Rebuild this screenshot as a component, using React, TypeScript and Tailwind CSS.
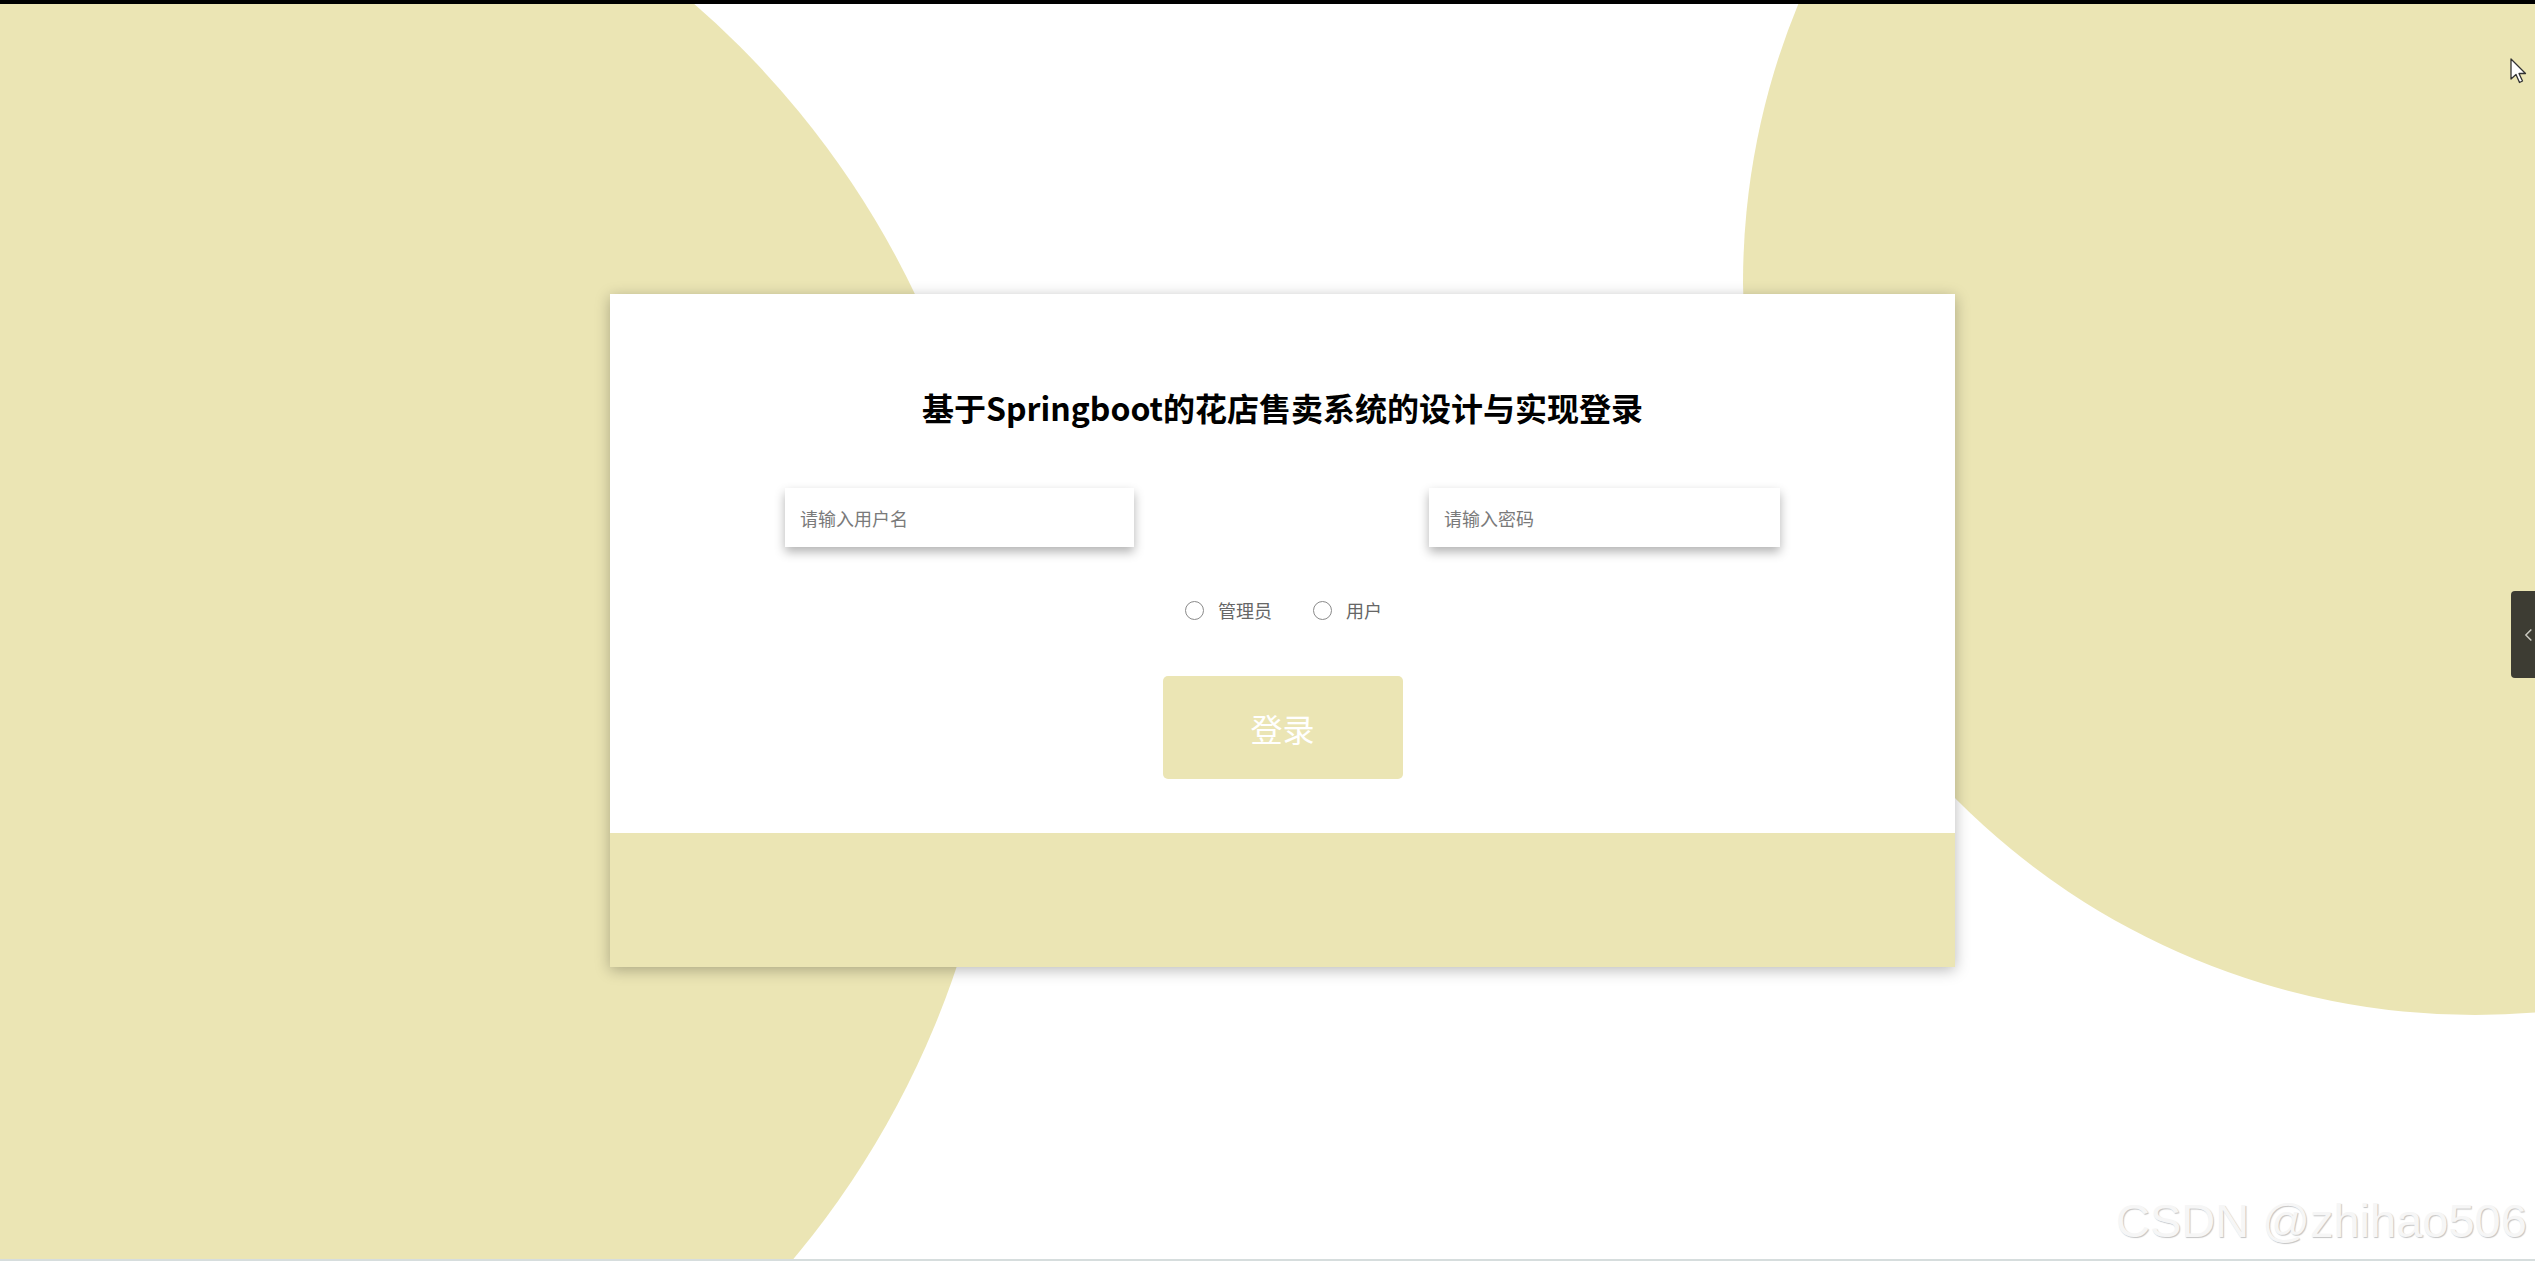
import { useState } from "react";

const KHAKI = "bg-[#ebe5b4]";

function RoleRadio({
  label,
  checked,
  onSelect,
}: {
  label: string;
  checked: boolean;
  onSelect: () => void;
}) {
  return (
    <label className="flex items-center gap-[14px] cursor-pointer" onClick={onSelect}>
      <span className="w-[19px] h-[19px] rounded-full border-[1.5px] border-[#8a8a8a] bg-white flex items-center justify-center">
        {checked && <span className="w-[9px] h-[9px] rounded-full bg-[#8a8a8a]" />}
      </span>
      <span className="text-[18px] leading-[24px] text-[#666]">{label}</span>
    </label>
  );
}

export default function App() {
  const [role, setRole] = useState<string>("");

  return (
    <div className="relative h-[1261px] w-[2535px] overflow-hidden bg-white font-['Noto_Sans_CJK_SC','Noto_Sans',sans-serif]">
      {/* 상단 검은 테두리 */}
      <div className="relative z-20 h-[4px] bg-black" />

      {/* 배경 원 */}
      <div className={`absolute left-[-795px] top-[-217px] w-[1798px] h-[1798px] rounded-full ${KHAKI}`} />
      <div className={`absolute left-[1743px] top-[-449px] w-[1464px] h-[1464px] rounded-full ${KHAKI}`} />

      {/* 로그인 카드 */}
      <div className="relative z-10 ml-[610px] mt-[290px] w-[1345px] shadow-[0_3px_14px_rgba(0,0,0,0.28)]">
        <div className="h-[539px] bg-white flex flex-col items-center pt-[89px]">
          <h1 className="text-[32px] leading-[48px] font-bold text-black">
            基于Springboot的花店售卖系统的设计与实现登录
          </h1>

          <div className="mt-[57px] w-full px-[175px] flex justify-between">
            <input
              type="text"
              placeholder="请输入用户名"
              className="w-[349px] h-[59px] bg-white pl-[15px] text-[18px] text-[#333] placeholder:text-[#7a7a7a] outline-none shadow-[0_5px_10px_rgba(0,0,0,0.3)]"
            />
            <input
              type="password"
              placeholder="请输入密码"
              className="w-[351px] h-[59px] bg-white pl-[15px] text-[18px] text-[#333] placeholder:text-[#7a7a7a] outline-none shadow-[0_5px_10px_rgba(0,0,0,0.3)]"
            />
          </div>

          <div className="mt-[51px] flex items-center gap-[41px] pl-[2px]">
            <RoleRadio label="管理员" checked={role === "admin"} onSelect={() => setRole("admin")} />
            <RoleRadio label="用户" checked={role === "user"} onSelect={() => setRole("user")} />
          </div>

          <button
            className={`mt-[54px] w-[240px] h-[103px] rounded-[5px] ${KHAKI} text-white text-[32px] leading-none`}
          >
            登录
          </button>
        </div>
        <div className={`h-[134px] ${KHAKI}`} />
      </div>

      {/* 오른쪽 사이드 탭 */}
      <div className="absolute right-0 top-[591px] z-20 w-[24px] h-[87px] rounded-l-[4px] bg-[#3d3c33] flex items-center pl-[13px]">
        <svg width="12" height="18" viewBox="0 0 12 18" fill="none">
          <path d="M8 3 L2 9 L8 15" stroke="#c9c9c0" strokeWidth="1.6" />
        </svg>
      </div>

      {/* 마우스 커서 */}
      <svg className="absolute left-[2510px] top-[58px] z-20" width="18" height="28" viewBox="0 0 18 28">
        <path d="M1 1 L1 21 L6 16.5 L9.5 24.5 L12.5 23 L9 15.5 L15.5 15.5 Z" fill="#fff" stroke="#333" strokeWidth="1.3" strokeLinejoin="round" />
      </svg>

      {/* 워터마크 */}
      <div className="absolute left-[2116px] top-[1197px] z-20 font-['Liberation_Sans',Arial,sans-serif] text-[47px] leading-none text-[#f6f6f6] whitespace-nowrap [text-shadow:1px_1px_1px_#c4c4c4,-1px_-1px_0_#ffffff]">
        CSDN @zhihao506
      </div>

      <div className="absolute bottom-0 left-0 z-20 w-full h-[2px] bg-[#d6dddd]" />
    </div>
  );
}
